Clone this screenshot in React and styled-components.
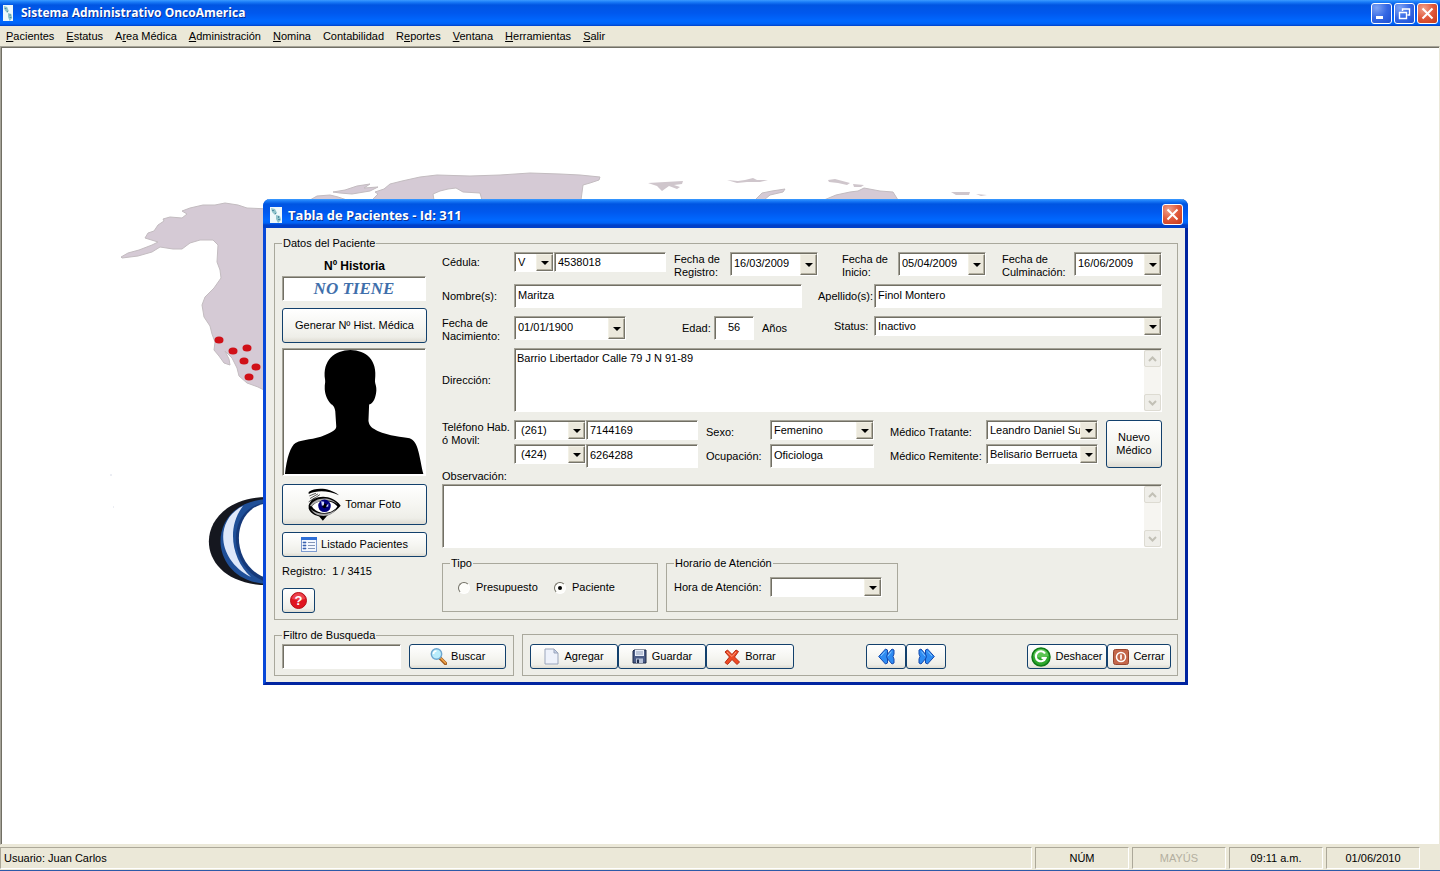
import React from "react";
import styled, { createGlobalStyle, css } from "styled-components";

const GlobalStyle = createGlobalStyle`
  *, *::before, *::after { box-sizing: border-box; }
  body { margin: 0; background: #fff; }
  body, button, input, select, textarea {
    font-family: "Liberation Sans", Arial, sans-serif;
    font-size: 11px;
    line-height: 13px;
    color: #000;
  }
`;

/* ---------- shared bevels ---------- */

const sunken = css`
  border: 1px solid;
  border-color: #a5a398 #fff #fff #a5a398;
  border-radius: 0;
  box-shadow: inset 1px 1px 0 #716f64;
  background: #fff;
`;

const raised = css`
  border: 1px solid;
  border-color: #f3f1e6 #77756a #77756a #f3f1e6;
  box-shadow: inset -1px -1px 0 #b4b0a0;
  background: #ebe8dc;
`;

/* ---------- application frame ---------- */

const Desktop = styled.div`
  display: flex;
  flex-direction: column;
  min-height: 100vh;
`;

const TitleBar = styled.header`
  display: flex;
  align-items: center;
  gap: 8px;
  height: 26px;
  padding: 0 2px 0 3px;
  background: linear-gradient(#3c9bff 0, #1a7cf8 2px, #0055e2 5px, #0058ee 13px, #0068ff 21px, #0062f5 24px, #0040c8 26px);
`;

const Title = styled.h1`
  flex: 1;
  margin: 0;
  font-family: "Open Sans", "Noto Sans", sans-serif;
  font-size: ${(p) => p.$size || 12}px;
  line-height: 18px;
  font-weight: 700;
  color: #fff;
  text-shadow: 1px 1px 0 #0a2f94;
  white-space: nowrap;
`;

const CaptionButtons = styled.div`
  display: flex;
  gap: 2px;
`;

const CaptionButton = styled.button`
  display: grid;
  place-items: center;
  width: 21px;
  height: 21px;
  padding: 0;
  border: 1px solid #fff;
  border-radius: 3px;
  background: ${(p) =>
    p.$close
      ? "radial-gradient(circle at 30% 25%, #f0a28c, #e0583a 50%, #c4391a)"
      : "radial-gradient(circle at 25% 20%, #7fa4f4, #3568e4 50%, #1d4fd2)"};
`;

const MenuBar = styled.nav`
  display: flex;
  height: 20px;
  background: #ebe8d8;
`;

const MenuItem = styled.button`
  padding: 0 6px;
  border: 0;
  background: none;
`;

const Workspace = styled.main`
  position: relative;
  flex: 1;
  min-height: 700px;
  overflow: hidden;
  border: 1px solid;
  border-color: #a5a398 #ebe8d8 #ebe8d8 #a5a398;
  box-shadow: inset 1px 1px 0 #716f64;
`;

const Backdrop = styled.svg`
  position: absolute;
  top: 0;
  left: 0;
`;

const StatusBar = styled.footer`
  display: flex;
  gap: 3px;
  height: 26px;
  padding: 2px 20px 1px 0;
  border-bottom: 1px solid #2c5aa8;
  background: #ebe8d8;
`;

const StatusPanel = styled.div`
  display: flex;
  align-items: center;
  justify-content: ${(p) => (p.$wide ? "flex-start" : "center")};
  flex: ${(p) => (p.$wide ? "1" : "0 0 94px")};
  padding: 0 3px;
  border: 1px solid;
  border-color: #aca899 #fff #fff #aca899;
  color: ${(p) => (p.$off ? "#b3afa0" : "#000")};
`;

/* ---------- dialog ---------- */

const Dialog = styled.section`
  position: absolute;
  top: 152px;
  left: 262px;
  width: 925px;
  border: solid #0848d8;
  border-width: 0 3px 3px;
  border-right-color: #0024a0;
  border-bottom-color: #0024a0;
  border-radius: 7px 7px 0 0;
  background: #eeeee8;
`;

const DialogTitle = styled(TitleBar)`
  gap: 6px;
  height: 29px;
  margin: 0 -3px;
  padding: 2px 5px 0 7px;
  border-radius: 7px 7px 0 0;
`;

const DialogBody = styled.form`
  display: flex;
  flex-direction: column;
  gap: 9px;
  padding: 9px 7px 6px 8px;
`;

const Group = styled.fieldset`
  min-width: 0;
  margin: 0;
  padding: 0 7px;
  border: 1px solid #a9a89c;
`;

const Legend = styled.legend`
  margin: 0;
  padding: 0 1px;
  line-height: 13px;
`;

const PatientLayout = styled.div`
  display: grid;
  grid-template-columns: 145px 1fr;
  gap: 15px;
  padding-right: 8px;
`;

const SidePane = styled.div`
  display: flex;
  flex-direction: column;
  gap: 7px;
  padding: 10px 0 6px;
`;

const HistoryBox = styled.div`
  display: flex;
  flex-direction: column;
  gap: 3px;
  font-size: 12px;
  font-weight: 700;
  text-align: center;
`;

const HistoryInput = styled.input`
  ${sunken}
  width: 144px;
  height: 25px;
  padding: 0;
  font-family: "Liberation Serif", "Times New Roman", serif;
  font-size: 17px;
  font-style: italic;
  font-weight: 700;
  line-height: 20px;
  text-align: center;
  color: #3f6fab;
`;

const Photo = styled.div`
  ${sunken}
  width: 144px;
  height: 128px;
  margin: -2px 0 1px;
  padding: 1px;

  svg {
    display: block;
    width: 100%;
    height: 100%;
  }
`;

const Record = styled.p`
  margin: 1px 0 3px;
`;

const XpButton = styled.button`
  display: flex;
  align-items: center;
  justify-content: center;
  gap: ${(p) => p.$gap || 4}px;
  width: ${(p) => (p.$width ? `${p.$width}px` : "auto")};
  height: ${(p) => p.$height || 25}px;
  padding: 0;
  border: 1px solid #12406c;
  border-radius: 3px;
  background: linear-gradient(#fff, #f6f6f2 50%, #eeeee8 85%, #dedbd2);
  white-space: nowrap;

  svg {
    flex: none;
  }
`;

const NewDoctor = styled(XpButton)`
  grid-area: 1 / 8 / 3 / 9;
  justify-self: end;
`;

const FormPane = styled.div`
  display: flex;
  flex-direction: column;
  gap: 8px;
  padding-top: 2px;
`;

const Row = styled.div`
  display: grid;
  grid-template-columns: ${(p) => p.$cols};
  grid-auto-rows: ${(p) => p.$height || 24}px;
  align-items: start;
`;

const Label = styled.label`
  align-self: ${(p) => (p.$lines || p.$combo ? "start" : "center")};
  grid-row: ${(p) => (p.$tall ? "span 2" : "auto")};
  padding-top: ${(p) => (p.$lines ? 1 : 0)}px;
  padding-left: ${(p) => p.$indent || 0}px;
  line-height: ${(p) => (p.$combo ? 20 : 13)}px;
  white-space: nowrap;
`;

const TextInput = styled.input`
  ${sunken}
  width: ${(p) => (p.$width ? `${p.$width}px` : "100%")};
  min-width: 0;
  height: ${(p) => p.$height || 24}px;
  padding: 0 3px ${(p) => (p.$height === 20 ? 0 : 3)}px;
  text-align: ${(p) => (p.$center ? "center" : "left")};
`;

const DropFrame = styled.div`
  ${sunken}
  display: grid;
  grid-template-columns: minmax(0, 1fr) 17px;
  width: 100%;
  height: ${(p) => p.$height || 20}px;
  padding: 1px 0 0 1px;

  select, input {
    grid-area: 1 / 1 / 2 / 3;
    width: 100%;
    min-width: 0;
    height: 100%;
    margin: 0;
    padding: 0 17px 0 2px;
    border: 0;
    appearance: none;
    background: none;
    text-overflow: clip;
    outline: 0;
  }

  input {
    padding-bottom: 3px;
  }
`;

const DropArrow = styled.span`
  ${raised}
  grid-area: 1 / 2;
  display: grid;
  place-items: center;
  pointer-events: none;

  &::after {
    content: "";
    border: 4px solid transparent;
    border-top-color: #000;
    border-bottom: 0;
  }
`;

const MemoFrame = styled.div`
  ${sunken}
  display: flex;
  height: 64px;
  padding: 1px 0 0 1px;

  textarea {
    flex: 1;
    min-width: 0;
    padding: 2px 1px;
    border: 0;
    resize: none;
    overflow: hidden;
    background: none;
    outline: 0;
  }
`;

const ScrollTrack = styled.div`
  display: flex;
  flex-direction: column;
  justify-content: space-between;
  width: 17px;
  background: #f6f5f1;
`;

const ScrollButton = styled.button`
  display: grid;
  place-items: center;
  height: 17px;
  padding: 0;
  border: 1px solid #dddbd2;
  border-radius: 2px;
  background: #efeee9;
`;

const Observation = styled.div`
  display: flex;
  flex-direction: column;
  margin-top: -8px;

  label {
    line-height: 16px;
  }
`;

const SmallGroups = styled.div`
  display: grid;
  grid-template-columns: 216px 232px;
  align-items: start;
  gap: 8px;
  padding-top: 1px;
`;

const GroupLine = styled.div`
  display: flex;
  align-items: center;
  height: 41px;
  padding-bottom: 6px;
`;

const HourLine = styled(Row)`
  height: 41px;
  padding-top: 7px;
`;

const RadioLabel = styled.label`
  display: flex;
  align-items: center;
  gap: 6px;
  width: 96px;

  &:first-child {
    margin-left: 8px;
  }
`;

const Radio = styled.input`
  appearance: none;
  display: grid;
  place-items: center;
  width: 12px;
  height: 12px;
  margin: 0;
  border: 1px solid;
  border-color: #716f64 #fff #fff #716f64;
  border-radius: 50%;
  background: #fdfdfa;

  &:checked::after {
    content: "";
    width: 4px;
    height: 4px;
    border-radius: 50%;
    background: #000;
  }
`;

const BottomRow = styled.div`
  display: grid;
  grid-template-columns: 240px 1fr;
  align-items: end;
  gap: 8px;
`;

const FilterLine = styled.div`
  display: flex;
  gap: 8px;
  padding: 2px 0 6px;
`;

const ActionPanel = styled.div`
  display: flex;
  gap: 72px;
  height: 42px;
  padding: 9px 6px 6px 7px;
  border: 1px solid #a9a89c;
`;

const ButtonRun = styled.div`
  display: flex;

  &:last-child {
    margin-left: auto;
  }
`;

/* ---------- drawings ---------- */

const AppIcon = ({ w, h }) => (
  <svg width={w} height={h} viewBox="0 0 12 16" preserveAspectRatio="none" aria-hidden="true">
    <rect width="12" height="16" fill="#eef8fa" />
    <path d="M1 1l4 1 2 4-2 2-3-3zM6 8l4 1 1 4-3 3-2-4z" fill="#8fc3cb" />
    <path d="M2 3h2v1H2zM8 9h1v2H8zM5 6h1v1H5zM8 12h2v1H8z" fill="#4f8ba0" />
  </svg>
);

const CloseGlyph = () => (
  <svg width="15" height="15" viewBox="0 0 15 15" aria-hidden="true">
    <path d="M2.500 2.500l10 10M12.500 2.500l-10 10" stroke="#fff" strokeWidth="2" />
  </svg>
);

const MinimizeGlyph = () => (
  <svg width="13" height="13" viewBox="0 0 13 13" aria-hidden="true">
    <path d="M1 9h7v3H1z" fill="#fff" />
  </svg>
);

const RestoreGlyph = () => (
  <svg width="13" height="13" viewBox="0 0 13 13" aria-hidden="true">
    <path d="M4.500 4V2h7v6h-2M4 2h8M1.500 5.500h7v6h-7zM1 5.500h8" fill="none" stroke="#fff" strokeWidth="1.400" />
  </svg>
);

const Scroller = () => (
  <ScrollTrack>
    <ScrollButton type="button" disabled aria-label="Subir">
      <svg width="9" height="6" viewBox="0 0 9 6"><path d="M1 5l3.500-3.500L8 5" fill="none" stroke="#c2c0b6" strokeWidth="2" /></svg>
    </ScrollButton>
    <ScrollButton type="button" disabled aria-label="Bajar">
      <svg width="9" height="6" viewBox="0 0 9 6"><path d="M1 1l3.500 3.500L8 1" fill="none" stroke="#c2c0b6" strokeWidth="2" /></svg>
    </ScrollButton>
  </ScrollTrack>
);

const MapArt = () => (
  <Backdrop width="1440" height="800" viewBox="1 47 1440 800" aria-hidden="true">
    <g fill="#d5cad5" stroke="#c3bcc0" strokeWidth="1" strokeLinejoin="round">
      <path d="M121 257L128 253L139 250L152 245L158 242L145 238L148 233L154 231L158 225L164 221L163 219L170 217L182 218L187 214L182 211L190 208L203 205L215 205L225 203L238 205L247 208L270 209V393L258 387L247 383L239 376L237 368L232 358L225 351L229 359L230 365L224 363L219 356L214 350L215 342L212 334L210 326L204 317L202 305L205 297L214 288L221 278L220 270L217 262L218 245L213 240L200 240L190 243L182 249L173 249L160 247L152 252L138 256L122 258Z" />
      <path d="M310 200L317 196L330 195L338 197L347 200Z" />
      <path d="M333 192L345 190L357 186L370 184L364 188L378 187L370 191L352 194L340 193Z" />
      <path d="M372 200L378 194L375 192L384 189L390 184L402 181L420 177L437 175L470 176L500 175L530 173L560 174L580 175L600 177L599 180L590 183L583 185L581 200H482L480 193L463 192L456 188L448 189L440 191L433 194L434 200Z" />
      <path d="M755 200L762 193L772 191L785 189L783 192L770 195L764 200Z" />
      <path d="M824 200L836 195L850 192L858 191L864 188L880 191L893 192L898 200Z" />
    </g>
    <g fill="#cfc6cc">
      <path d="M648 183L665 182L683 181L682 184L674 185L680 187L677 189L669 186L662 191L657 186Z" />
      <path d="M727 180L738 181L745 180L753 178L757 180L768 180L760 182L747 182L737 183Z" />
      <path d="M828 180L835 179L850 183L847 185L838 183L829 182Z" />
      <path d="M853 184L864 185L861 187L854 187Z" />
      <path d="M951 192L970 192L969 195L956 195ZM976 194L987 195L981 196Z" />
    </g>
    <g fill="#d01018">
      {[[219, 340], [233, 351], [247, 348], [244, 361], [256, 367], [249, 377]].map(([x, y]) => (
        <ellipse key={x} cx={x} cy={y} rx="4.500" ry="3.500" />
      ))}
    </g>
    <path d="M270 497C190 495 187 587 270 585Z" fill="#15171f" />
    <path d="M270 499C202 500 206 584 270 584Z" fill="#1f4f98" />
    <path d="M243 506C214 520 217 560 251 577C232 560 226 528 243 506Z" fill="#dfe8fa" />
    <path d="M270 502C222 504 227 574 270 583Z" fill="#15397a" />
    <path d="M270 503C228 505 229 570 270 579Z" fill="#fff" />
    <path d="M110 475h2M113 507h1" stroke="#d8dce8" />
  </Backdrop>
);

const Silhouette = () => (
  <svg viewBox="60 375 426 375" preserveAspectRatio="none" role="img" aria-label="Foto del paciente">
    <path d="M63 750C68 702 80 665 95 656C120 643 150 648 185 632C205 623 219 617 219 606L216 560C214 545 208 541 203 538C190 525 183 505 184 486C184 478 186 476 185 465C176 405 215 376 262 375C310 376 345 405 337 465C336 478 342 482 341 498C339 520 332 536 319 540L317 590C320 608 330 612 345 620C380 635 420 638 442 642C470 650 472 702 484 750Z" />
  </svg>
);

const EyeIcon = () => (
  <svg width="33" height="33" viewBox="382 52 100 100" aria-hidden="true">
    <path d="M384 64C405 50 445 50 476 74C445 60 410 58 384 70Z" />
    <path d="M386 76l20-8M388 84l24-14M392 90l26-18M384 94l18-12" stroke="#000" strokeWidth="2" />
    <path d="M384 104C395 72 455 68 481 106C468 120 455 130 440 136L427 151L416 138C400 134 388 126 384 114Z" />
    <path d="M388 106C402 80 448 74 472 102C452 84 412 86 392 108Z" fill="#aaa" />
    <path d="M394 108C406 88 452 84 471 108C456 132 412 136 394 108Z" fill="#fff" />
    <path d="M390 116C408 134 450 136 468 116C452 144 406 144 390 116Z" fill="#aaa" />
    <circle cx="432" cy="106" r="19" fill="#00007c" />
    <circle cx="432" cy="106" r="7" />
    <path d="M422 92l9 2-1 10-6 2zM436 108l8-9-1 10z" fill="#cfd3ff" />
  </svg>
);

const ListIcon = () => (
  <svg width="16" height="16" viewBox="0 0 16 16" aria-hidden="true">
    <rect x=".5" y=".5" width="15" height="14" fill="#f4f8ff" stroke="#7d9bd0" />
    <path d="M0 0h16v3H0z" fill="#2f6fd6" />
    <path d="M2 5h3v1H2zM2 8h3v1H2zM2 11h3v1H2z" fill="#3b62b0" stroke="#3b62b0" strokeWidth=".6" />
    <path d="M7 5.500h7M7 8.500h7M7 11.500h7" stroke="#8597b8" />
  </svg>
);

const HelpIcon = () => (
  <svg width="17" height="17" viewBox="0 0 17 17" aria-hidden="true">
    <circle cx="8.500" cy="8.500" r="8" fill="#e01520" stroke="#b51018" />
    <path d="M2 7a6.500 6 0 0 1 13 0q-6.500 2-13 0" fill="#f4606a" opacity=".6" />
    <text x="8.500" y="13" textAnchor="middle" fontFamily="Liberation Sans, sans-serif" fontWeight="700" fontSize="13" fill="#fff">?</text>
  </svg>
);

const SearchIcon = () => (
  <svg width="17" height="17" viewBox="0 0 17 17" aria-hidden="true">
    <path d="M10 10l5.500 5.500" stroke="#a35c1c" strokeWidth="3.400" strokeLinecap="round" />
    <path d="M11 10.500l4.500 4.500" stroke="#f0a64c" strokeWidth="1.600" strokeLinecap="round" />
    <circle cx="6.500" cy="6" r="5.200" fill="#b9ecfb" stroke="#6da6cf" strokeWidth="1.400" />
    <path d="M3.500 6a3 3 0 0 1 3-3" stroke="#fff" strokeWidth="1.500" fill="none" />
  </svg>
);

const PageIcon = () => (
  <svg width="15" height="17" viewBox="0 0 15 17" aria-hidden="true">
    <path d="M1 1h9l4 4v11H1z" fill="#eef2fb" stroke="#9aa5bb" />
    <path d="M10 1v4h4z" fill="#c6d2ea" stroke="#9aa5bb" />
  </svg>
);

const SaveIcon = () => (
  <svg width="15" height="15" viewBox="0 0 15 15" aria-hidden="true">
    <path d="M1 2l1-1h12v13H1z" fill="#4a5b85" stroke="#1d2a48" />
    <path d="M3 1h9v6H3z" fill="#e9eef8" />
    <path d="M4 3h7M4 5h7" stroke="#8e9cb8" />
    <path d="M4 9.500h7V14H4z" fill="#b7c2d8" />
    <path d="M5 10.500h2V14H5z" fill="#22304f" />
  </svg>
);

const DeleteIcon = () => (
  <svg width="16" height="16" viewBox="0 0 16 16" aria-hidden="true">
    <path d="M1 3l2.500-2L8 5.500 12 1l2.500 1.500L10.500 8l5 5-2.500 2.500L8 10.500 3.500 15.500 1 13.500 5.500 8z" fill="#ee4b25" stroke="#b52a10" />
    <path d="M3 3l5 4.500L12 3" stroke="#ff9a78" fill="none" />
  </svg>
);

const DoubleArrow = ({ right }) => (
  <svg width="17" height="17" viewBox="0 0 17 17" aria-hidden="true">
    <g transform={right ? "matrix(-1 0 0 1 17 0)" : undefined} fill="#2f8cf2" stroke="#1548ac" strokeLinejoin="round">
      <path d="M14 1l2 1v4l-1 2.500 1 2.500v4l-2 1L7.500 8.500z" />
      <path d="M7.500 1l2 1v4L8.500 8.500l1 2.500v4l-2 1L.7 8.500z" />
      <path d="M7 3.500L3 8M13.500 3.500L10 8" stroke="#8ccbff" fill="none" />
    </g>
  </svg>
);

const UndoIcon = () => (
  <svg width="20" height="20" viewBox="0 0 20 20" aria-hidden="true">
    <circle cx="10" cy="10" r="9" fill="#2ea82c" stroke="#0f7a18" strokeWidth="1.500" />
    <path d="M2.500 9a7.500 7 0 0 1 15 0q-7.500 3-15 0" fill="#7cd870" opacity=".6" />
    <path d="M14 6.500A5 5 0 1 0 14.500 11H10.500" fill="none" stroke="#fff" strokeWidth="2.200" />
  </svg>
);

const PowerIcon = () => (
  <svg width="16" height="16" viewBox="0 0 16 16" aria-hidden="true">
    <rect x=".5" y=".5" width="15" height="15" rx="2" fill="#c4674a" stroke="#97452e" />
    <circle cx="8" cy="8" r="4.500" fill="none" stroke="#fff" strokeWidth="1.500" />
    <path d="M8 5.500v5" stroke="#fff" strokeWidth="1.700" />
  </svg>
);

/* ---------- composed controls ---------- */

const Combo = ({ id, value, label }) => (
  <DropFrame>
    <select id={id} aria-label={label} defaultValue={value}>
      <option>{value}</option>
    </select>
    <DropArrow />
  </DropFrame>
);

const DateBox = ({ id, value }) => (
  <DropFrame $height={24}>
    <input id={id} defaultValue={value} />
    <DropArrow />
  </DropFrame>
);

const MENU = [
  ["", "P", "acientes"],
  ["", "E", "status"],
  ["A", "r", "ea Médica"],
  ["", "A", "dministración"],
  ["", "N", "omina"],
  ["Contabilidad", "", ""],
  ["R", "e", "portes"],
  ["", "V", "entana"],
  ["", "H", "erramientas"],
  ["", "S", "alir"],
];

export default function App() {
  return (
    <Desktop>
      <GlobalStyle />
      <TitleBar>
        <AppIcon w={10} h={16} />
        <Title>Sistema Administrativo OncoAmerica</Title>
        <CaptionButtons>
          <CaptionButton aria-label="Minimizar"><MinimizeGlyph /></CaptionButton>
          <CaptionButton aria-label="Restaurar"><RestoreGlyph /></CaptionButton>
          <CaptionButton $close aria-label="Cerrar"><CloseGlyph /></CaptionButton>
        </CaptionButtons>
      </TitleBar>
      <MenuBar>
        {MENU.map(([before, key, after]) => (
          <MenuItem key={before + key + after}>{before}<u>{key}</u>{after}</MenuItem>
        ))}
      </MenuBar>

      <Workspace>
        <MapArt />
        <Dialog aria-label="Tabla de Pacientes">
          <DialogTitle>
            <AppIcon w={12} h={16} />
            <Title as="h2" $size={13}>Tabla de Pacientes - Id: 311</Title>
            <CaptionButton $close aria-label="Cerrar ventana"><CloseGlyph /></CaptionButton>
          </DialogTitle>
          <DialogBody onSubmit={(e) => e.preventDefault()}>
            <Group>
              <Legend>Datos del Paciente</Legend>
              <PatientLayout>
                <SidePane>
                  <HistoryBox>
                    <label htmlFor="historia">Nº Historia</label>
                    <HistoryInput id="historia" readOnly value="NO TIENE" />
                  </HistoryBox>
                  <XpButton type="button" $height={35}>Generar Nº Hist. Médica</XpButton>
                  <Photo><Silhouette /></Photo>
                  <XpButton type="button" $height={41}><EyeIcon />Tomar Foto</XpButton>
                  <XpButton type="button"><ListIcon />Listado Pacientes</XpButton>
                  <Record>Registro:&nbsp; 1 / 3415</Record>
                  <XpButton type="button" $width={33} aria-label="Ayuda"><HelpIcon /></XpButton>
                </SidePane>

                <FormPane>
                  <Row $cols="72px 40px 1fr 64px 88px 80px 88px 88px 88px">
                    <Label htmlFor="cedula" $combo>Cédula:</Label>
                    <Combo label="Nacionalidad" value="V" />
                    <TextInput id="cedula" $height={20} defaultValue="4538018" />
                    <Label htmlFor="registro" $lines $indent={8}>Fecha de<br />Registro:</Label>
                    <DateBox id="registro" value="16/03/2009" />
                    <Label htmlFor="inicio" $lines $indent={24}>Fecha de<br />Inicio:</Label>
                    <DateBox id="inicio" value="05/04/2009" />
                    <Label htmlFor="fin" $lines $indent={16}>Fecha de<br />Culminación:</Label>
                    <DateBox id="fin" value="16/06/2009" />
                  </Row>
                  <Row $cols="72px 1fr 72px 1fr">
                    <Label htmlFor="nombre">Nombre(s):</Label>
                    <TextInput id="nombre" defaultValue="Maritza" />
                    <Label htmlFor="apellido" $indent={16}>Apellido(s):</Label>
                    <TextInput id="apellido" defaultValue="Finol Montero" />
                  </Row>
                  <Row $cols="72px 112px 88px 40px 80px 40px 1fr">
                    <Label htmlFor="nacimiento" $lines>Fecha de<br />Nacimiento:</Label>
                    <DateBox id="nacimiento" value="01/01/1900" />
                    <Label htmlFor="edad" $indent={56}>Edad:</Label>
                    <TextInput id="edad" $center defaultValue="56" />
                    <Label as="span" $indent={8}>Años</Label>
                    <Label htmlFor="status" $combo>Status:</Label>
                    <Combo id="status" value="Inactivo" />
                  </Row>
                  <Row $cols="72px 1fr" $height={64}>
                    <Label htmlFor="direccion">Dirección:</Label>
                    <MemoFrame>
                      <textarea id="direccion" defaultValue="Barrio Libertador Calle 79 J N 91-89" />
                      <Scroller />
                    </MemoFrame>
                  </Row>
                  <Row $cols="72px 72px 1fr 72px 104px 112px 112px 64px">
                    <Label htmlFor="tel1" $lines $tall>Teléfono Hab.<br />ó Movil:</Label>
                    <Combo label="Código habitación" value={"\u00a0(261)"} />
                    <TextInput id="tel1" $height={20} defaultValue="7144169" />
                    <Label htmlFor="sexo" $indent={8}>Sexo:</Label>
                    <Combo id="sexo" value="Femenino" />
                    <Label htmlFor="tratante" $indent={16}>Médico Tratante:</Label>
                    <Combo id="tratante" value="Leandro Daniel Su" />
                    <NewDoctor type="button" $height={48} $width={56}>Nuevo<br />Médico</NewDoctor>
                    <Combo label="Código móvil" value={"\u00a0(424)"} />
                    <TextInput aria-label="Teléfono móvil" defaultValue="6264288" />
                    <Label htmlFor="ocupacion" $indent={8}>Ocupación:</Label>
                    <TextInput id="ocupacion" defaultValue="Oficiologa" />
                    <Label htmlFor="remitente" $indent={16}>Médico Remitente:</Label>
                    <Combo id="remitente" value="Belisario Berrueta" />
                  </Row>
                  <Observation>
                    <label htmlFor="observacion">Observación:</label>
                    <MemoFrame>
                      <textarea id="observacion" />
                      <Scroller />
                    </MemoFrame>
                  </Observation>
                  <SmallGroups>
                    <Group>
                      <Legend>Tipo</Legend>
                      <GroupLine>
                        <RadioLabel><Radio type="radio" name="tipo" />Presupuesto</RadioLabel>
                        <RadioLabel><Radio type="radio" name="tipo" defaultChecked />Paciente</RadioLabel>
                      </GroupLine>
                    </Group>
                    <Group>
                      <Legend>Horario de Atención</Legend>
                      <HourLine $cols="96px 112px">
                        <Label htmlFor="hora" $combo>Hora de Atención:</Label>
                        <Combo id="hora" value="" />
                      </HourLine>
                    </Group>
                  </SmallGroups>
                </FormPane>
              </PatientLayout>
            </Group>

            <BottomRow>
              <Group>
                <Legend>Filtro de Busqueda</Legend>
                <FilterLine>
                  <TextInput $width={120} $height={25} aria-label="Filtro de Busqueda" />
                  <XpButton $width={97}><SearchIcon />Buscar</XpButton>
                </FilterLine>
              </Group>
              <ActionPanel>
                <ButtonRun>
                  <XpButton type="button" $width={88} $gap={5}><PageIcon />Agregar</XpButton>
                  <XpButton type="button" $width={88} $gap={5}><SaveIcon />Guardar</XpButton>
                  <XpButton type="button" $width={88} $gap={5}><DeleteIcon />Borrar</XpButton>
                </ButtonRun>
                <ButtonRun>
                  <XpButton type="button" $width={40} aria-label="Anterior"><DoubleArrow /></XpButton>
                  <XpButton type="button" $width={40} aria-label="Siguiente"><DoubleArrow right /></XpButton>
                </ButtonRun>
                <ButtonRun>
                  <XpButton type="button" $width={80}><UndoIcon />Deshacer</XpButton>
                  <XpButton type="button" $width={64}><PowerIcon />Cerrar</XpButton>
                </ButtonRun>
              </ActionPanel>
            </BottomRow>
          </DialogBody>
        </Dialog>
      </Workspace>

      <StatusBar>
        <StatusPanel $wide>Usuario: Juan Carlos</StatusPanel>
        <StatusPanel>NÚM</StatusPanel>
        <StatusPanel $off>MAYÚS</StatusPanel>
        <StatusPanel>09:11 a.m.</StatusPanel>
        <StatusPanel>01/06/2010</StatusPanel>
      </StatusBar>
    </Desktop>
  );
}
